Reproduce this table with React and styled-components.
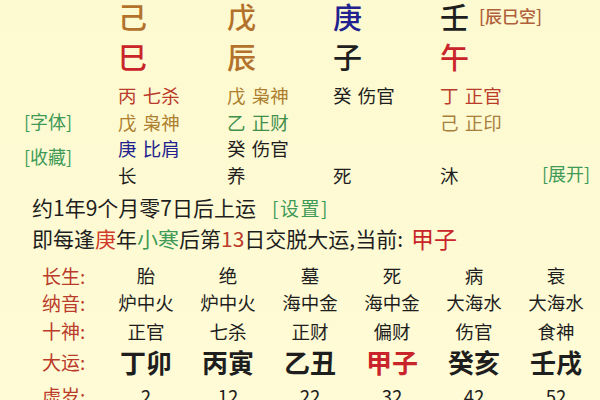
import React from "react";
import styled, { createGlobalStyle } from "styled-components";

const GlobalStyle = createGlobalStyle`
  html, body {
    margin: 0;
    padding: 0;
    background: #fdf9d1;
  }
  body {
    font-family: "Noto Sans CJK SC", "Noto Sans", sans-serif;
    color: #1e1e1e;
  }
`;

const colors = {
  brown: "#b3722b",
  gold: "#ad7f2e",
  red: "#c8242a",
  rust: "#bb3b2b",
  blue: "#21228f",
  green: "#3f9a58",
  ink: "#1e1e1e",
};

const Page = styled.div`
  width: 600px;
  height: 400px;
  overflow: hidden;
  background: linear-gradient(180deg, #fdf9d0 0%, #fefbd6 100%);
`;

const Top = styled.div`
  display: flex;
`;

const Side = styled.div`
  width: 118px;
  display: flex;
  flex-direction: column;
  padding: 110px 0 0 24px;
  box-sizing: border-box;
  gap: 13px;
`;

const Tag = styled.span`
  font-size: ${(p) => p.$size || 18}px;
  line-height: 22px;
  color: ${(p) => p.$color || colors.green};
  margin-left: ${(p) => p.$ml || 0}px;
  white-space: nowrap;
`;

const Pillars = styled.div`
  display: grid;
  grid-template-columns: 109px 106px 107px 102px;
`;

const Pillar = styled.div`
  display: flex;
  flex-direction: column;
`;

const Stem = styled.div`
  font-size: 29px;
  font-weight: 500;
  line-height: 32px;
  height: 32px;
  color: ${(p) => p.$color};
  display: flex;
  align-items: center;
  white-space: nowrap;
`;

const Branch = styled(Stem)`
  margin-top: 8px;
`;

const Hidden = styled.div`
  margin-top: 10px;
  height: 79.5px;
  display: flex;
  flex-direction: column;
`;

const HiddenRow = styled.div`
  font-size: 18.5px;
  line-height: 26.5px;
  color: ${(p) => p.$color};
  white-space: nowrap;
  word-spacing: 2px;
`;

const Stage = styled.div`
  font-size: 18.5px;
  line-height: 26.5px;
`;

const RightCol = styled.div`
  flex: 1;
  display: flex;
  align-items: flex-end;
  padding-bottom: 4px;
`;

const Info = styled.div`
  padding: 4px 0 0 32px;
  display: flex;
  flex-direction: column;
`;

const InfoLine = styled.div`
  font-size: 21px;
  line-height: 31px;
  white-space: nowrap;
  display: flex;
  align-items: center;
`;

const Hl = styled.span`
  color: ${(p) => p.$color};
  font-size: ${(p) => (p.$size ? `${p.$size}px` : "inherit")};
  margin-left: ${(p) => p.$ml || 0}px;
  letter-spacing: ${(p) => p.$ls || 0}px;
`;

const Table = styled.div`
  margin-top: 8px;
  display: grid;
  grid-template-columns: 105px repeat(6, 82px);
`;

const Label = styled.div`
  padding-left: 42px;
  font-size: 19px;
  color: ${colors.rust};
  height: ${(p) => p.$h}px;
  line-height: ${(p) => p.$h}px;
`;

const Cell = styled.div`
  text-align: center;
  font-size: ${(p) => (p.$big ? 26 : 18.5)}px;
  font-weight: ${(p) => (p.$big ? 700 : 400)};
  color: ${(p) => p.$color || colors.ink};
  height: ${(p) => p.$h}px;
  line-height: ${(p) => p.$h}px;
  white-space: nowrap;
`;

const pillars = [
  {
    stem: ["己", colors.brown],
    branch: ["巳", colors.red],
    hidden: [
      ["丙 七杀", colors.rust],
      ["戊 枭神", colors.gold],
      ["庚 比肩", colors.blue],
    ],
    stage: "长",
  },
  {
    stem: ["戊", colors.brown],
    branch: ["辰", colors.brown],
    hidden: [
      ["戊 枭神", colors.gold],
      ["乙 正财", "#3f8f4a"],
      ["癸 伤官", colors.ink],
    ],
    stage: "养",
  },
  {
    stem: ["庚", colors.blue],
    branch: ["子", colors.ink],
    hidden: [["癸 伤官", colors.ink]],
    stage: "死",
  },
  {
    stem: ["壬", colors.ink],
    branch: ["午", colors.red],
    hidden: [
      ["丁 正官", colors.rust],
      ["己 正印", "#a8803c"],
    ],
    stage: "沐",
    note: "[辰巳空]",
  },
];

const rows = [
  { label: "长生:", h: 27, values: ["胎", "绝", "墓", "死", "病", "衰"] },
  { label: "纳音:", h: 27.5, values: ["炉中火", "炉中火", "海中金", "海中金", "大海水", "大海水"] },
  { label: "十神:", h: 28, values: ["正官", "七杀", "正财", "偏财", "伤官", "食神"] },
  { label: "大运:", h: 34, big: true, values: ["丁卯", "丙寅", "乙丑", "甲子", "癸亥", "壬戌"] },
  { label: "虚岁:", h: 34, values: ["2", "12", "22", "32", "42", "52"] },
];

export default function App() {
  return (
    <Page>
      <GlobalStyle />
      <Top>
        <Side>
          <Tag>[字体]</Tag>
          <Tag>[收藏]</Tag>
        </Side>
        <Pillars>
          {pillars.map((p, i) => (
            <Pillar key={i}>
              <Stem $color={p.stem[1]}>
                {p.stem[0]}
                {p.note && (
                  <Tag $color="#b0603a" $size={17} $ml={10}>
                    {p.note}
                  </Tag>
                )}
              </Stem>
              <Branch $color={p.branch[1]}>{p.branch[0]}</Branch>
              <Hidden>
                {p.hidden.map(([t, c]) => (
                  <HiddenRow key={t} $color={c}>
                    {t}
                  </HiddenRow>
                ))}
              </Hidden>
              <Stage>{p.stage}</Stage>
            </Pillar>
          ))}
        </Pillars>
        <RightCol>
          <Tag>[展开]</Tag>
        </RightCol>
      </Top>
      <Info>
        <InfoLine>
          约1年9个月零7日后上运
          <Hl $color={colors.green} $size={19} $ml={16} $ls={1.5}>
            [设置]
          </Hl>
        </InfoLine>
        <InfoLine>
          即每逢<Hl $color="#d23b2a">庚</Hl>年<Hl $color={colors.green}>小寒</Hl>后第
          <Hl $color={colors.rust}>13</Hl>日交脱大运,当前:
          <Hl $color={colors.red} $size={23} $ml={8}>
            甲子
          </Hl>
        </InfoLine>
      </Info>
      <Table>
        {rows.map((r) => (
          <React.Fragment key={r.label}>
            <Label $h={r.h}>{r.label}</Label>
            {r.values.map((v, j) => (
              <Cell
                key={j}
                $h={r.h}
                $big={r.big}
                $color={r.big && v === "甲子" ? colors.red : undefined}
              >
                {v}
              </Cell>
            ))}
          </React.Fragment>
        ))}
      </Table>
    </Page>
  );
}
